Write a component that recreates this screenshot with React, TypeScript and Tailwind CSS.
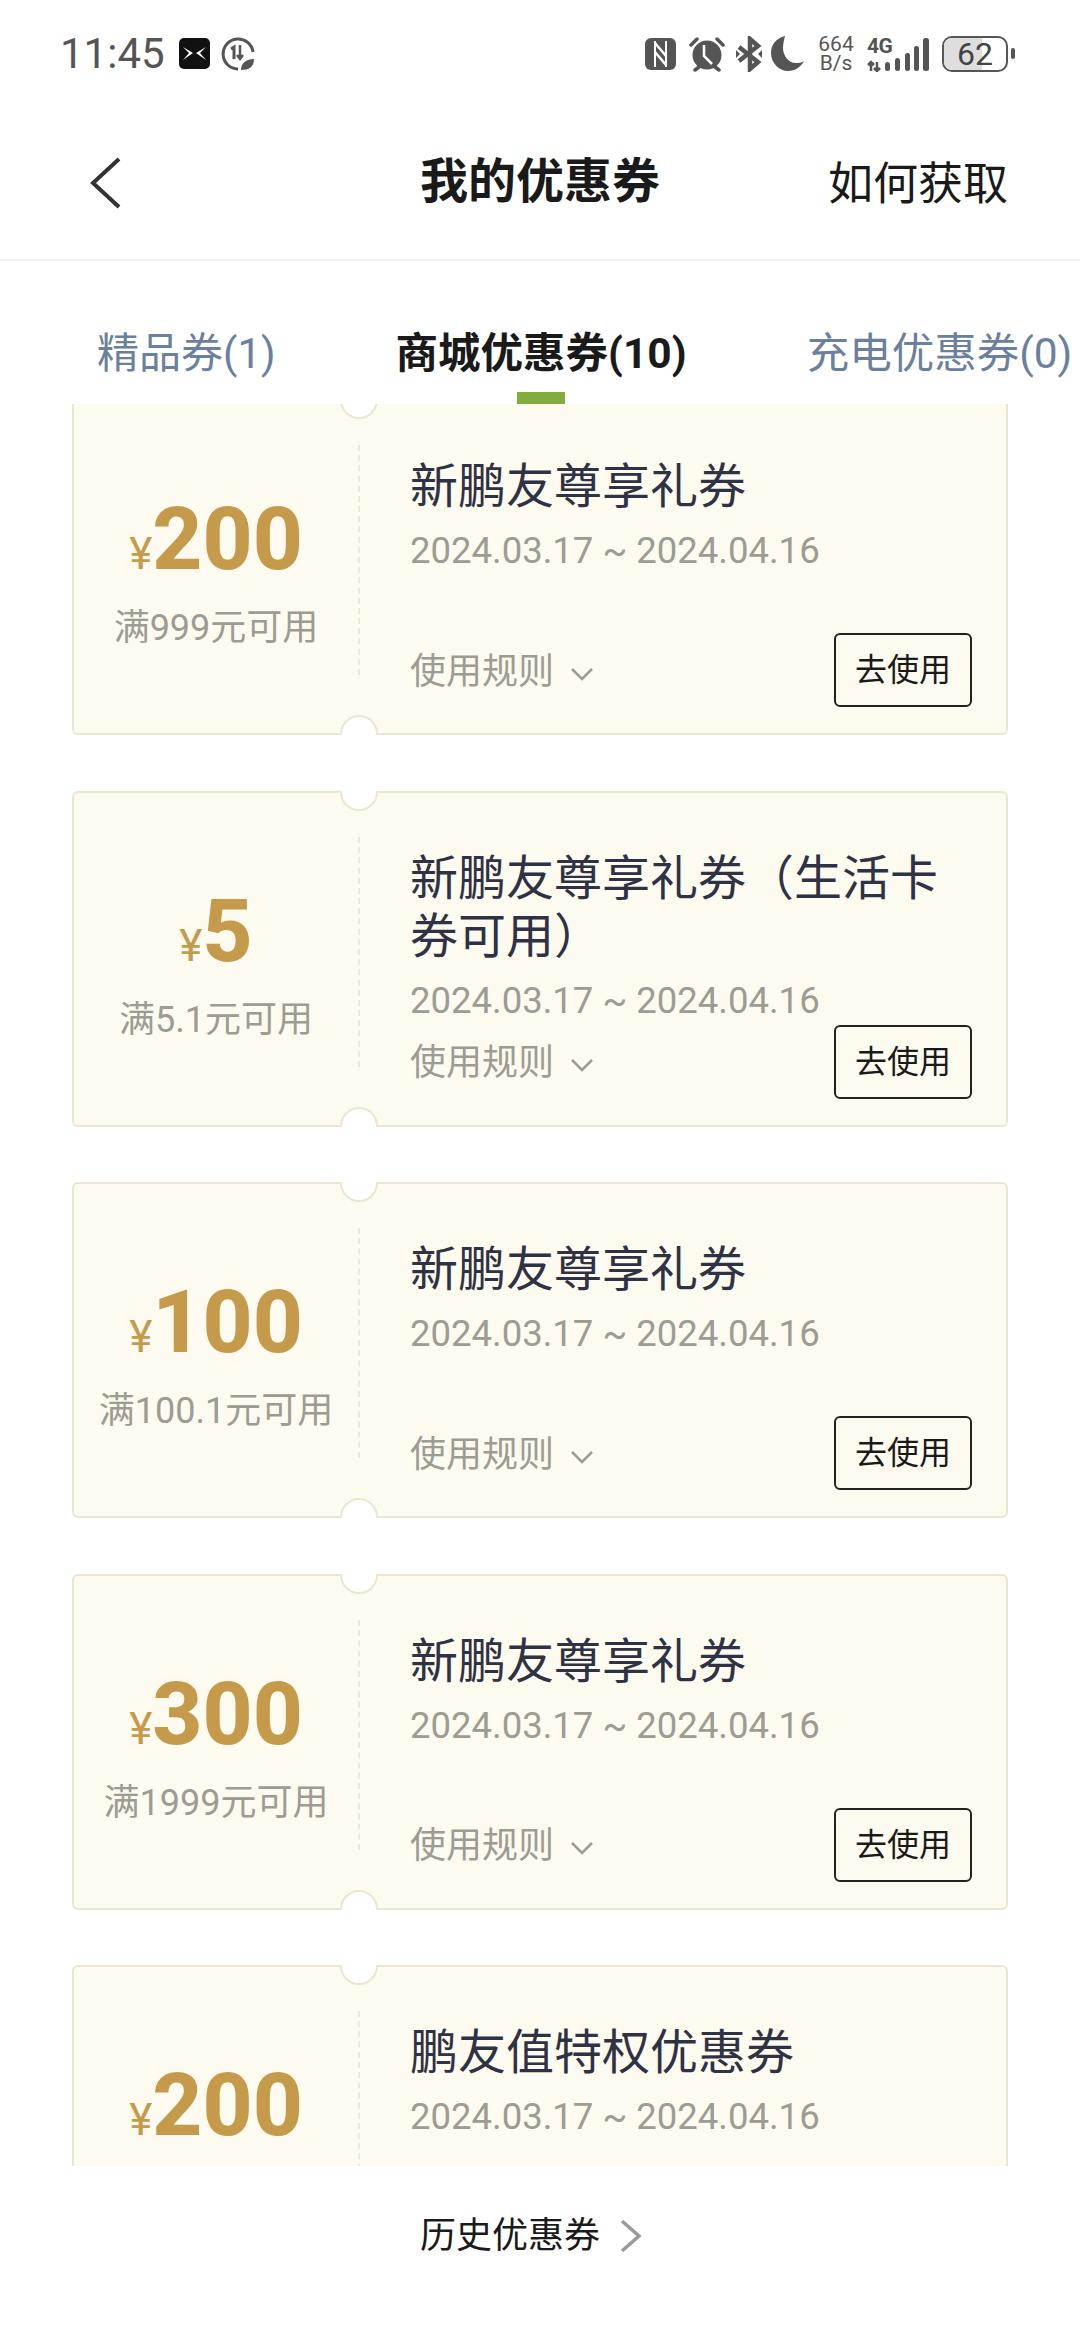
const coupons = [
  { id: 1, amount: '200', limit: '满999元可用', title: '新鹏友尊享礼券' },
  { id: 2, amount: '5', limit: '满5.1元可用', title: '新鹏友尊享礼券（生活卡券可用）' },
  { id: 3, amount: '100', limit: '满100.1元可用', title: '新鹏友尊享礼券' },
  { id: 4, amount: '300', limit: '满1999元可用', title: '新鹏友尊享礼券' },
  // last card is cut by the footer, nothing below the date shows
  { id: 5, amount: '200', title: '鹏友值特权优惠券' },
];

const StatusIcons = () => (
  <div className="flex items-center">
    {/* NFC */}
    <svg width="31" height="32" viewBox="0 0 31 32" className="mr-[13px]">
      <rect width="31" height="32" rx="6" fill="#555" />
      <path d="M10 3v26M21 3v26" stroke="#fff" strokeWidth="2" />
      <path d="M10 5l11 13M10 14l11 13" stroke="#fff" strokeWidth="2.5" fill="none" />
    </svg>
    {/* alarm */}
    <svg width="36" height="36" viewBox="0 0 36 36" className="mr-[11px]">
      <circle cx="18" cy="19" r="14.5" fill="#555" />
      <path d="M15 9v11l8 8" stroke="#fff" strokeWidth="2.5" fill="none" />
      <path d="M2 9l6-6M34 9l-6-6M6 34l4-3M30 34l-4-3" stroke="#555" strokeWidth="3.5" strokeLinecap="round" />
    </svg>
    {/* bluetooth */}
    <svg width="26" height="36" viewBox="0 0 26 36" className="mr-[9px]">
      <path d="M3 11l19 15-8 7V3l8 7L3 25" stroke="#555" strokeWidth="4.5" fill="none" />
      <path d="M0 14v8l4-4zM26 14v8l-4-4z" fill="#555" />
    </svg>
    {/* moon */}
    <svg width="33" height="35" viewBox="0 0 33 35" className="mr-[14px]">
      <path d="M14 0C5 2 0 9 0 17c0 10 8 18 17 18 7 0 13-4 16-10-3 2-5 2-8 2-8 0-13-8-13-15 0-4 1-8 2-12z" fill="#555" />
    </svg>
    <div className="w-[36px] mr-[13px] flex flex-col items-center text-[21px] leading-[19px] text-[#555]">
      <span>664</span>
      <span>B/s</span>
    </div>
    {/* signal */}
    <div className="relative w-[62px] h-[36px] mr-[13px]">
      <span className="absolute left-0 top-[-1px] text-[21px] leading-[22px] font-bold tracking-[-0.5px] text-[#555]">4G</span>
      <svg width="62" height="36" viewBox="0 0 62 36" className="absolute left-0 top-0">
        <path d="M4 26v9M1 29l3-3 3 3M10 26v9M7 32l3 3 3-3" stroke="#555" strokeWidth="2.5" fill="none" />
        <rect x="18" y="26" width="5" height="9" rx="2.5" fill="#555" />
        <rect x="28" y="22" width="5" height="13" rx="2.5" fill="#555" />
        <rect x="38" y="17" width="5" height="18" rx="2.5" fill="#555" />
        <rect x="47" y="10" width="5" height="25" rx="2.5" fill="#555" />
        <rect x="56" y="2" width="6" height="33" rx="2.5" fill="#555" />
      </svg>
    </div>
    {/* battery */}
    <div className="relative w-[66px] h-[36px] rounded-[10px] border-2 border-[#555] overflow-hidden flex items-center justify-center">
      <div className="absolute left-0 top-0 bottom-0 w-[62%] bg-[#dedede]" />
      <span className="relative text-[32px] leading-none text-[#444]">62</span>
    </div>
    <div className="ml-[3px] w-[4px] h-[11px] rounded-[2px] bg-[#555]" />
  </div>
);

const Notch = ({ position }: { position: 'top' | 'bottom' }) => (
  <div className={position === 'top'
    ? 'absolute left-[266px] top-[-2px] w-[38px] h-[20px] overflow-hidden'
    : 'absolute left-[266px] bottom-[-2px] w-[38px] h-[20px] overflow-hidden'}>
    <div className={position === 'top'
      ? 'w-[38px] h-[38px] -mt-[18px] rounded-full bg-white border-2 border-[#ece6d0]'
      : 'w-[38px] h-[38px] rounded-full bg-white border-2 border-[#ece6d0]'} />
  </div>
);

const CouponCard = ({ amount, limit, title }: { amount: string; limit?: string; title: string }) => (
  <div className="relative flex h-[336px] shrink-0 rounded-[6px] border-2 border-[#ece6d0] bg-[#fdfaef]">
    <Notch position="top" />
    <Notch position="bottom" />
    <div className="w-[284px] shrink-0 flex flex-col items-center pt-[95px]">
      <div className="flex items-baseline text-[#c59b4b] leading-none">
        <span className="text-[44px]">¥</span>
        <span className="text-[87px] font-extrabold">{amount}</span>
      </div>
      {limit && <div className="mt-[23px] text-[36px] leading-[44px] text-[#9c9c93] whitespace-nowrap">{limit}</div>}
    </div>
    <div className="absolute left-[284px] top-[44px] h-[230px] border-l-2 border-dashed border-[#ece8da]" />
    <div className="flex-1 flex flex-col pl-[52px] pr-[34px] pt-[57px] pb-[26px]">
      <div className="text-[48px] leading-[58px] text-[#2f3245]">{title}</div>
      <div className="mt-[13px] text-[36.5px] leading-[44px] text-[#9c9c93] whitespace-nowrap">2024.03.17 ~ 2024.04.16</div>
      {limit && (
        <div className="mt-auto flex items-center justify-between">
          <div className="flex items-center text-[36px] leading-[44px] text-[#9c9c93] pt-[3px]">
            <span>使用规则</span>
            <svg width="24" height="14" viewBox="0 0 24 14" className="ml-[16px] mt-[4px]">
              <path d="M2 2l10 10L22 2" stroke="#9c9c93" strokeWidth="2.5" fill="none" />
            </svg>
          </div>
          <button className="w-[138px] h-[74px] rounded-[6px] border-2 border-[#222] text-[32px] text-[#1a1a1a] flex items-center justify-center">
            去使用
          </button>
        </div>
      )}
    </div>
  </div>
);

export default function App() {
  return (
    <div className="h-[2340px] flex flex-col overflow-hidden bg-white font-['Roboto','Noto_Sans_CJK_SC',sans-serif]">
      {/* status bar */}
      <div className="h-[100px] shrink-0 flex items-center justify-between pl-[60px] pr-[65px] pt-[7px]">
        <div className="flex items-center">
          <span className="text-[42px] leading-none text-[#555]">11:45</span>
          <svg width="31" height="31" viewBox="0 0 31 31" className="ml-[14px]">
            <rect width="31" height="31" rx="5" fill="#111" />
            <path d="M4 9l10 6-10 7 6-7zM27 9l-10 6 10 7-6-7z" fill="#fff" />
          </svg>
          <svg width="34" height="34" viewBox="0 0 34 34" className="ml-[11px]">
            <path d="M32 15A15 15 0 1 0 17 32" stroke="#555" strokeWidth="3" fill="none" />
            <path d="M10 12l3-2v12" stroke="#555" strokeWidth="3" fill="none" />
            <path d="M19 8v14M16 18l3 4 3-4" stroke="#555" strokeWidth="2.5" fill="none" />
            <path d="M20 33c0-7 5-11 13-11 0 8-5 11-13 11z" fill="#555" />
          </svg>
        </div>
        <StatusIcons />
      </div>

      {/* header */}
      <div className="relative h-[161px] shrink-0 flex items-center justify-center border-b-2 border-[#f1f1f1]">
        <svg width="32" height="52" viewBox="0 0 32 52" className="absolute left-[90px] top-[57px]">
          <path d="M29 2L3 26l26 24" stroke="#333" strokeWidth="4" fill="none" />
        </svg>
        <span className="pt-[4px] text-[48px] leading-none font-bold text-[#1a1a1a]">我的优惠券</span>
        <span className="absolute right-[72px] top-[62px] text-[45px] leading-none text-[#1a1a1a]">如何获取</span>
      </div>

      {/* tabs */}
      <div className="h-[143px] shrink-0 flex gap-[120px] pl-[97px] overflow-hidden whitespace-nowrap">
        <div className="pt-[67px] text-[42px] leading-[52px] text-[#6b7f9e]">精品券(1)</div>
        <div className="relative pt-[67px] text-[42.5px] leading-[52px] font-bold text-[#1a1a1a]">
          商城优惠券(10)
          <div className="absolute left-1/2 -translate-x-1/2 bottom-0 w-[48px] h-[12px] bg-[#82ad3e]" />
        </div>
        <div className="pt-[67px] text-[42.5px] leading-[52px] text-[#6b7f9e]">充电优惠券(0)</div>
      </div>

      {/* coupons */}
      <div className="flex-1 min-h-0 overflow-hidden px-[72px]">
        <div className="-mt-[5px] flex flex-col gap-[55.5px]">
          {coupons.map(c => (
            <CouponCard key={c.id} amount={c.amount} limit={c.limit} title={c.title} />
          ))}
        </div>
      </div>

      {/* footer */}
      <div className="h-[174px] shrink-0 flex items-start justify-center pt-[46px] pr-[18px]">
        <span className="text-[36px] leading-[48px] text-[#1a1a1a]">历史优惠券</span>
        <svg width="22" height="34" viewBox="0 0 22 34" className="ml-[20px] mt-[7px]">
          <path d="M2 2l17 15L2 32" stroke="#9a9a9a" strokeWidth="3.5" fill="none" />
        </svg>
      </div>
    </div>
  );
}
